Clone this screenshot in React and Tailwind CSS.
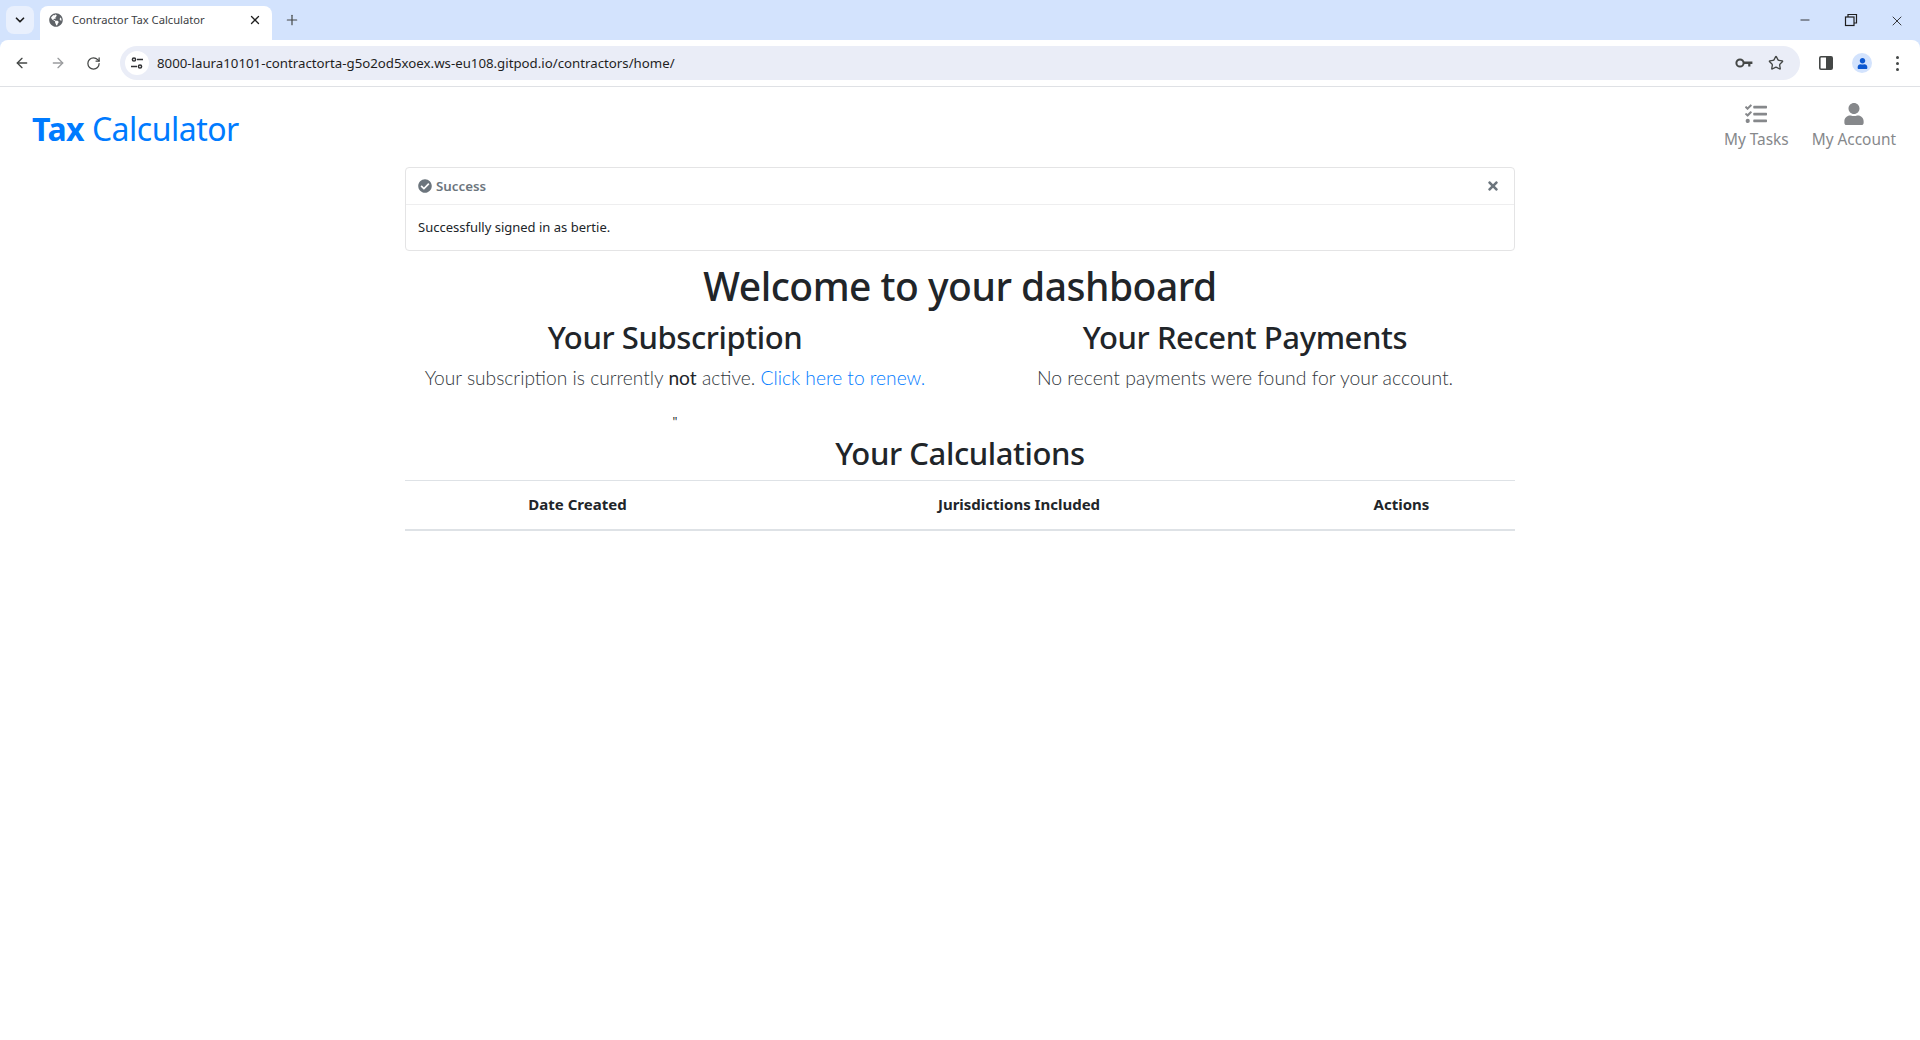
import { ArrowLeft, ArrowRight, RotateCw, Star, Plus, Minus, X, ChevronDown } from 'lucide-react';
import { FaCheckCircle, FaGlobeAmericas, FaTasks, FaTimes, FaUser } from 'react-icons/fa';

function TabBar() {
    return (
        <div className="flex h-10 bg-[#d3e3fd] pl-[6px]">
            <div className="mt-[6px] flex h-[28px] w-[28px] items-center justify-center rounded-lg bg-[#e9f0fd] text-[#1f1f1f]">
                <ChevronDown size={14} strokeWidth={3} />
            </div>
            <div className="ml-[6px] mt-[6px] flex h-[34px] w-[232px] items-center rounded-t-lg bg-white pb-[6px] pl-[9px] pr-[10px]">
                <FaGlobeAmericas size={14} className="text-[#5f6368]" />
                <span className="ml-[9px] flex-1 font-['Noto_Sans',sans-serif] text-[11.2px] text-[#3c4043]">Contractor Tax Calculator</span>
                <X size={14} strokeWidth={2.2} className="text-[#1f1f1f]" />
            </div>
            <div className="ml-[12px] mt-[12px] h-4 text-[#444746]">
                <Plus size={16} strokeWidth={1.8} />
            </div>
            <div className="ml-auto flex items-start pt-[13px] text-[#1f1f1f]">
                <div className="flex w-[46px] justify-center"><Minus size={14} strokeWidth={1.5} /></div>
                <div className="flex w-[46px] justify-center">
                    <svg width="14" height="14" viewBox="0 0 14 14" fill="none" stroke="currentColor" strokeWidth="1.2">
                        <rect x="1.5" y="4" width="8.5" height="8.5" />
                        <path d="M4 4V1.5h8.5V10H10" />
                    </svg>
                </div>
                <div className="flex w-[46px] justify-center"><X size={16} strokeWidth={1.3} /></div>
            </div>
        </div>
    );
}

function Toolbar() {
    return (
        <div className="bg-[#d3e3fd]">
            <div className="flex h-[47px] items-center rounded-t-lg border-b border-[#dfe1e5] bg-white">
                <ArrowLeft size={16} strokeWidth={2} className="ml-[14px] text-[#444746]" />
                <ArrowRight size={16} strokeWidth={2} className="ml-[20px] text-[#9a9c9e]" />
                <RotateCw size={15} strokeWidth={2} className="ml-[20px] text-[#444746]" />
                <div className="ml-[19px] flex h-[34px] w-[1680px] items-center rounded-full bg-[#eaedf7]">
                    <div className="ml-[5px] flex h-[24px] w-[24px] items-center justify-center rounded-full bg-white">
                        <svg width="14" height="14" viewBox="0 0 14 14" fill="none" stroke="#303134" strokeWidth="1.5">
                            <circle cx="4" cy="3.5" r="1.6" />
                            <path d="M7 3.5h6M1 10.5h6" />
                            <circle cx="10" cy="10.5" r="1.6" />
                        </svg>
                    </div>
                    <span className="ml-[8px] pt-[1px] font-['Noto_Sans',sans-serif] text-[13.25px] text-[#1f1f1f]">
                        8000-laura10101-contractorta-g5o2od5xoex.ws-eu108.gitpod.io/contractors/home/
                    </span>
                    <div className="ml-auto flex items-center pr-[16px] text-[#444746]">
                        <svg width="18" height="12" viewBox="0 0 18 12" fill="none" stroke="currentColor" strokeWidth="2">
                            <circle cx="5" cy="6" r="3.6" />
                            <path d="M8.8 4.4h8.6v2.6h-2v2.4h-2.2V7H8.8z" fill="currentColor" stroke="none" />
                        </svg>
                        <Star size={16} strokeWidth={2} className="ml-[15px]" />
                    </div>
                </div>
                <svg width="14" height="14" viewBox="0 0 14 14" className="ml-[19px]">
                    <rect x="0.8" y="0.8" width="12.4" height="12.4" rx="1.2" fill="none" stroke="#444746" strokeWidth="1.6" />
                    <rect x="7" y="1" width="6" height="12" fill="#444746" />
                </svg>
                <div className="ml-[19px] flex h-[20px] w-[20px] items-center justify-center rounded-full bg-[#d3e3fd]">
                    <FaUser size={11} className="text-[#0b57d0]" />
                </div>
                <div className="ml-[24px] flex flex-col gap-[3px]">
                    <span className="h-[3px] w-[3px] rounded-full bg-[#444746]" />
                    <span className="h-[3px] w-[3px] rounded-full bg-[#444746]" />
                    <span className="h-[3px] w-[3px] rounded-full bg-[#444746]" />
                </div>
            </div>
        </div>
    );
}

function NavItem({ icon, label }) {
    return (
        <div className="flex flex-col items-center text-[#86888b]">
            <div className="flex h-6 items-center">{icon}</div>
            <span className="mt-[2px] text-[15.4px] leading-6">{label}</span>
        </div>
    );
}

function Nav() {
    return (
        <div className="flex h-[79px] items-start justify-between pl-[32px] pr-[24px]">
            <div className="mt-[19px] text-[32px] leading-[46px] tracking-[-0.5px] text-[#007bff]">
                <span className="font-bold">Tax</span> Calculator
            </div>
            <div className="mt-[15px] flex gap-[23px]">
                <NavItem icon={<FaTasks size={22} />} label="My Tasks" />
                <NavItem icon={<FaUser size={22} />} label="My Account" />
            </div>
        </div>
    );
}

export default function App() {
    return (
        <div className="min-h-[1040px] bg-white font-['Noto_Sans',sans-serif] text-[#212529]">
            <TabBar />
            <Toolbar />
            <Nav />
            <div className="mx-auto w-[1110px]">
                <div className="mt-[1px] rounded border border-[#e4e4e5] bg-white">
                    <div className="flex h-[37px] items-center border-b border-[#eeeeef] pl-[12px] pr-[14px] text-[13.3px] font-semibold text-[#6c757d]">
                        <FaCheckCircle size={14} className="mr-[4px]" />
                        <span className="pt-[2px]">Success</span>
                        <FaTimes size={14} className="ml-auto" />
                    </div>
                    <div className="flex h-[45px] items-center pl-[12px] pt-[1px] text-[13px]">Successfully signed in as bertie.</div>
                </div>
                <h1 className="mt-[11px] h-[48px] text-center text-[39px] font-medium leading-[48px] tracking-[-0.5px]">Welcome to your dashboard</h1>
                <div className="mx-[-15px] mt-[8px] grid grid-cols-2">
                    <div className="flex flex-col items-center">
                        <h2 className="text-[31px] font-medium leading-[38px] tracking-[-0.4px]">Your Subscription</h2>
                        <p className="mt-[7px] font-['Lato',sans-serif] text-[19.2px] font-light leading-[30px] text-[#33383d]">
                            Your subscription is currently <span className="font-normal text-[#212529]">not</span> active. <a className="text-[#007bff]">Click here to renew.</a>
                        </p>
                        <p className="mt-[20px] text-[12px] leading-[18px]">"</p>
                    </div>
                    <div className="flex flex-col items-center">
                        <h2 className="text-[31px] font-medium leading-[38px] tracking-[-0.4px]">Your Recent Payments</h2>
                        <p className="mt-[7px] font-['Lato',sans-serif] text-[19.4px] font-light leading-[30px] text-[#33383d]">No recent payments were found for your account.</p>
                    </div>
                </div>
                <h2 className="mt-[3px] text-center text-[31px] font-medium leading-[38px] tracking-[-0.4px]">Your Calculations</h2>
                <table className="mt-[8px] w-full table-fixed border-t border-[#dee2e6] text-[15px] font-bold">
                    <colgroup>
                        <col className="w-[345px]" />
                        <col className="w-[538px]" />
                        <col className="w-[227px]" />
                    </colgroup>
                    <thead>
                        <tr className="h-[49px] border-b-2 border-[#dee2e6]">
                            <th className="pb-[2px] text-center">Date Created</th>
                            <th className="pb-[2px] text-center">Jurisdictions Included</th>
                            <th className="pb-[2px] text-center">Actions</th>
                        </tr>
                    </thead>
                </table>
            </div>
        </div>
    );
}
